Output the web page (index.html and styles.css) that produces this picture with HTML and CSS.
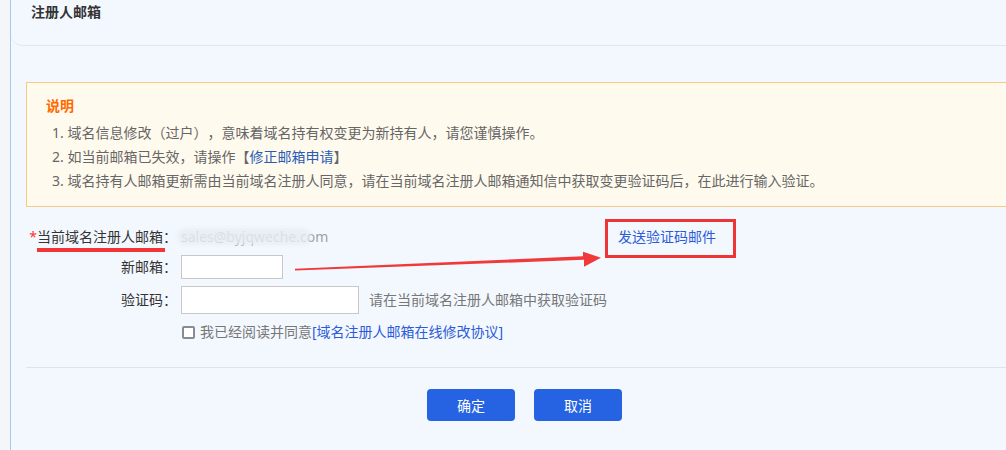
FILE: index.html
```html
<!DOCTYPE html>
<html>
<head>
    <meta charset="utf-8">
    <title>注册人邮箱</title>
    <link rel="stylesheet" href="styles.css">
</head>
<body>
    <div class="page">
        <div class="page-head">
            <h2>注册人邮箱</h2>
        </div>

        <div class="notice">
            <h3>说明</h3>
            <p>1. 域名信息修改（过户），意味着域名持有权变更为新持有人，请您谨慎操作。</p>
            <p>2. 如当前邮箱已失效，请操作【<a href="#">修正邮箱申请</a>】</p>
            <p>3. 域名持有人邮箱更新需由当前域名注册人同意，请在当前域名注册人邮箱通知信中获取变更验证码后，在此进行输入验证。</p>
        </div>

        <form class="form">
            <div class="row">
                <label class="label required"><span class="star">*</span>当前域名注册人邮箱：</label>
                <span class="email">sales@byjqweche.com</span>
                <a href="#" class="send-link">发送验证码邮件</a>
            </div>
            <div class="row row-new">
                <label class="label">新邮箱：</label>
                <input type="text" class="input input-small">
            </div>
            <div class="row row-code">
                <label class="label">验证码：</label>
                <input type="text" class="input input-code">
                <span class="hint">请在当前域名注册人邮箱中获取验证码</span>
            </div>
            <div class="row row-agree">
                <span class="check"></span>
                <span class="agree">我已经阅读并同意<a href="#">[域名注册人邮箱在线修改协议]</a></span>
            </div>
        </form>

        <div class="divider"></div>

        <div class="actions">
            <button class="btn">确定</button>
            <button class="btn">取消</button>
        </div>
    </div>

    <!-- annotation arrow -->
    <svg class="arrow" width="1006" height="450" viewBox="0 0 1006 450">
        <polygon points="295,268.8 583,256.2 583,251.7 601,257.7 584,266.7 584,259.8 295,270.6" fill="#f03a3a"/>
    </svg>
</body>
</html>
```

FILE: styles.css
```css
/* General Styles */
body {
    margin: 0;
    padding: 0;
    background-color: #f5f6fa;
    font-family: "Noto Sans", "Noto Sans CJK SC", sans-serif;
    font-size: 14px;
    color: #333;
    overflow: hidden;
    height: 450px;
    text-spacing-trim: space-all;
}

a {
    text-decoration: none;
}

/* Page card */
.page {
    margin-left: 10px;
    width: 1040px;
    min-height: 450px;
    border-left: 1px solid #abc9ef;
    background-color: #f3f8ff;
}

.page-head {
    height: 45px;
    padding-left: 20px;
    border-bottom: 1px solid #e3e7ec;
    border-bottom-left-radius: 12px;
}

.page-head h2 {
    margin: 0;
    font-size: 14px;
    line-height: 24px;
    font-weight: bold;
    color: #333;
}

/* Notice */
.notice {
    margin: 36px 0 0 15px;
    padding: 11px 0 13px 19px;
    border: 1px solid #f5cb84;
    background-color: #fffaee;
}

.notice h3 {
    margin: 0 0 3px;
    font-size: 14px;
    line-height: 24px;
    font-weight: bold;
    color: #ff6a00;
}

.notice p {
    margin: 0;
    padding-left: 6px;
    line-height: 24px;
    color: #666;
}

.notice p a {
    color: #2a5cb6;
}

/* Form */
.form {
    margin-top: 18px;
}

.row {
    display: flex;
    align-items: center;
    line-height: 24px;
}

.label {
    position: relative;
    width: 166px;
    margin-right: 4px;
    text-align: right;
    color: #333;
}

.label .star {
    color: #f33;
}

.label.required::after {
    content: "";
    position: absolute;
    left: 26px;
    top: 23px;
    width: 128px;
    height: 4px;
    background-color: #f23535;
}

.email {
    position: relative;
    width: 437px;
    color: #a0a0a0;
}

.email::after {
    content: "";
    position: absolute;
    left: -4px;
    top: 3px;
    width: 134px;
    height: 17px;
    border-radius: 8px;
    background-color: #e8edf4;
    filter: blur(2px);
    opacity: 0.82;
}

.send-link {
    position: relative;
    color: #2d5bd8;
}

.send-link::after {
    content: "";
    position: absolute;
    left: -13px;
    top: -6px;
    width: 131px;
    height: 39px;
    box-sizing: border-box;
    border: 3px solid #ee3535;
}

.row-new {
    margin-top: 6px;
}

.row-code {
    margin-top: 7px;
}

.input {
    box-sizing: border-box;
    border: 1px solid #c8c8c8;
    background-color: #fff;
    outline: none;
    padding: 0 6px;
    font-size: 14px;
}

.input-small {
    width: 102px;
    height: 24px;
}

.input-code {
    width: 178px;
    height: 28px;
}

.hint {
    margin-left: 10px;
    color: #777;
}

.row-agree {
    margin-top: 6px;
    padding-left: 171px;
}

.check {
    width: 13px;
    height: 13px;
    box-sizing: border-box;
    border: 2px solid #8a8a96;
    border-radius: 2px;
    background-color: #fff;
    margin-right: 5px;
}

.agree {
    color: #777;
}

.agree a {
    color: #2d5bd8;
}

/* Footer */
.divider {
    margin: 23px 0 0 15px;
    border-top: 1px solid #dfe3e8;
}

.actions {
    display: flex;
    gap: 19px;
    margin-top: 21px;
    padding-left: 416px;
}

.btn {
    width: 88px;
    height: 32px;
    border: none;
    border-radius: 4px;
    background-color: #2663e2;
    color: #fff;
    font-family: inherit;
    font-size: 14px;
    cursor: pointer;
}

/* Annotation */
.arrow {
    position: absolute;
    left: 0;
    top: 0;
    pointer-events: none;
}
```
